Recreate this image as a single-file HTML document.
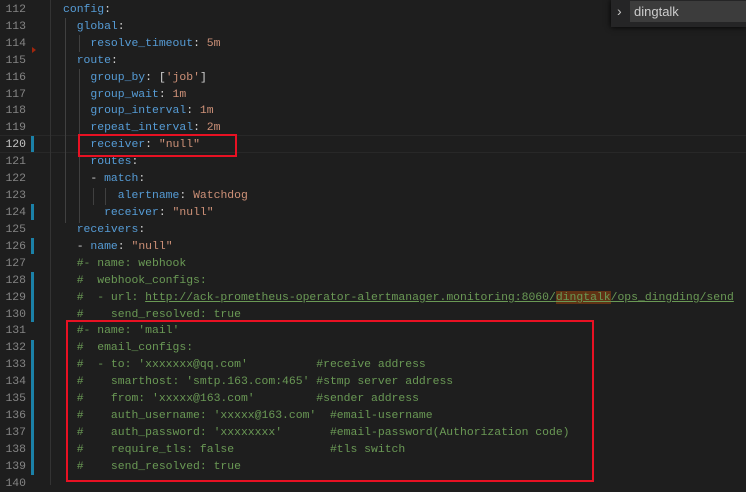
<!DOCTYPE html>
<html><head><meta charset="utf-8"><style>
body{margin:0;width:746px;height:485px;background:#1e1e1e;overflow:hidden;position:relative;font-family:"Liberation Mono",monospace;font-size:11.42px}
.l{position:absolute;left:0;height:17px;line-height:17px;white-space:pre;width:746px}
.n{position:absolute;right:720px;color:#858585}
.c{position:absolute;left:63px;color:#d4d4d4}
.k{color:#569cd6}.s{color:#ce9178}.b{color:#569cd6}.g{color:#6a9955}.p{color:#d4d4d4}
.u{text-decoration:underline}
.gb{position:absolute;left:31px;width:3px;background:#1b81a8}
.ig{position:absolute;width:1px;background:#404040}
.box{position:absolute;border:2px solid #e81123}
</style></head><body>
<div style="position:absolute;left:0;top:135px;width:746px;height:16px;border-top:1px solid #282828;border-bottom:1px solid #282828"></div>
<div class="ig" style="left:50px;top:0;height:485px;background:#333"></div>
<div class="ig" style="left:65px;top:18px;height:205px"></div>
<div class="ig" style="left:79px;top:35px;height:17px"></div>
<div class="ig" style="left:79px;top:69px;height:154px"></div>
<div class="ig" style="left:93px;top:188px;height:17px"></div>
<div class="ig" style="left:105px;top:188px;height:17px"></div>
<div class="gb" style="top:136px;height:16px"></div>
<div class="gb" style="top:204px;height:16px"></div>
<div class="gb" style="top:238px;height:16px"></div>
<div class="gb" style="top:272px;height:50px"></div>
<div class="gb" style="top:340px;height:135px"></div>
<div style="position:absolute;left:32px;top:47px;width:0;height:0;border-top:3px solid transparent;border-bottom:3px solid transparent;border-left:4px solid #a1260d"></div>
<div class="l" style="top:1px"><span class="n">112</span><span class="c"><span class="k">config</span>:</span></div>
<div class="l" style="top:18px"><span class="n">113</span><span class="c">  <span class="k">global</span>:</span></div>
<div class="l" style="top:35px"><span class="n">114</span><span class="c">    <span class="k">resolve_timeout</span>: <span class="s">5m</span></span></div>
<div class="l" style="top:52px"><span class="n">115</span><span class="c">  <span class="k">route</span>:</span></div>
<div class="l" style="top:69px"><span class="n">116</span><span class="c">    <span class="k">group_by</span>: [<span class="s">'job'</span>]</span></div>
<div class="l" style="top:86px"><span class="n">117</span><span class="c">    <span class="k">group_wait</span>: <span class="s">1m</span></span></div>
<div class="l" style="top:102px"><span class="n">118</span><span class="c">    <span class="k">group_interval</span>: <span class="s">1m</span></span></div>
<div class="l" style="top:119px"><span class="n">119</span><span class="c">    <span class="k">repeat_interval</span>: <span class="s">2m</span></span></div>
<div class="l" style="top:136px"><span class="n" style="color:#c6c6c6">120</span><span class="c">    <span class="k">receiver</span>: <span class="s">"null"</span></span></div>
<div class="l" style="top:153px"><span class="n">121</span><span class="c">    <span class="k">routes</span>:</span></div>
<div class="l" style="top:170px"><span class="n">122</span><span class="c">    - <span class="k">match</span>:</span></div>
<div class="l" style="top:187px"><span class="n">123</span><span class="c">        <span class="k">alertname</span>: <span class="s">Watchdog</span></span></div>
<div class="l" style="top:204px"><span class="n">124</span><span class="c">      <span class="k">receiver</span>: <span class="s">"null"</span></span></div>
<div class="l" style="top:221px"><span class="n">125</span><span class="c">  <span class="k">receivers</span>:</span></div>
<div class="l" style="top:238px"><span class="n">126</span><span class="c">  - <span class="k">name</span>: <span class="s">"null"</span></span></div>
<div class="l" style="top:255px"><span class="n">127</span><span class="c g">  #- name: webhook</span></div>
<div class="l" style="top:272px"><span class="n">128</span><span class="c g">  #  webhook_configs:</span></div>
<div class="l" style="top:289px"><span class="n">129</span><span class="c g">  #  - url: <span class="u">http://ack-prometheus-operator-alertmanager.monitoring:8060/<span style="background:#613214">dingtalk</span>/ops_dingding/send</span></span></div>
<div class="l" style="top:306px"><span class="n">130</span><span class="c g">  #    send_resolved: true</span></div>
<div class="l" style="top:322px"><span class="n">131</span><span class="c g">  #- name: 'mail'</span></div>
<div class="l" style="top:339px"><span class="n">132</span><span class="c g">  #  email_configs:</span></div>
<div class="l" style="top:356px"><span class="n">133</span><span class="c g">  #  - to: 'xxxxxxx@qq.com'          #receive address</span></div>
<div class="l" style="top:373px"><span class="n">134</span><span class="c g">  #    smarthost: 'smtp.163.com:465' #stmp server address</span></div>
<div class="l" style="top:390px"><span class="n">135</span><span class="c g">  #    from: 'xxxxx@163.com'         #sender address</span></div>
<div class="l" style="top:407px"><span class="n">136</span><span class="c g">  #    auth_username: 'xxxxx@163.com'  #email-username</span></div>
<div class="l" style="top:424px"><span class="n">137</span><span class="c g">  #    auth_password: 'xxxxxxxx'       #email-password(Authorization code)</span></div>
<div class="l" style="top:441px"><span class="n">138</span><span class="c g">  #    require_tls: false              #tls switch</span></div>
<div class="l" style="top:458px"><span class="n">139</span><span class="c g">  #    send_resolved: true</span></div>
<div class="l" style="top:475px"><span class="n">140</span></div>
<div class="box" style="left:78px;top:134px;width:155px;height:19px"></div>
<div class="box" style="left:66px;top:320px;width:524px;height:158px"></div>
<div style="position:absolute;left:611px;top:0;width:135px;height:27px;background:#252526;box-shadow:0 0 6px #000"></div>
<div style="position:absolute;left:617px;top:3px;color:#c5c5c5;font-family:'Liberation Sans',sans-serif;font-size:14px">&#8250;</div>
<div style="position:absolute;left:630px;top:1px;width:116px;height:21px;background:#3c3c3c;color:#ccc;font-family:'Liberation Sans',sans-serif;font-size:13px;line-height:21px;padding-left:4px">dingtalk</div>
</body></html>
